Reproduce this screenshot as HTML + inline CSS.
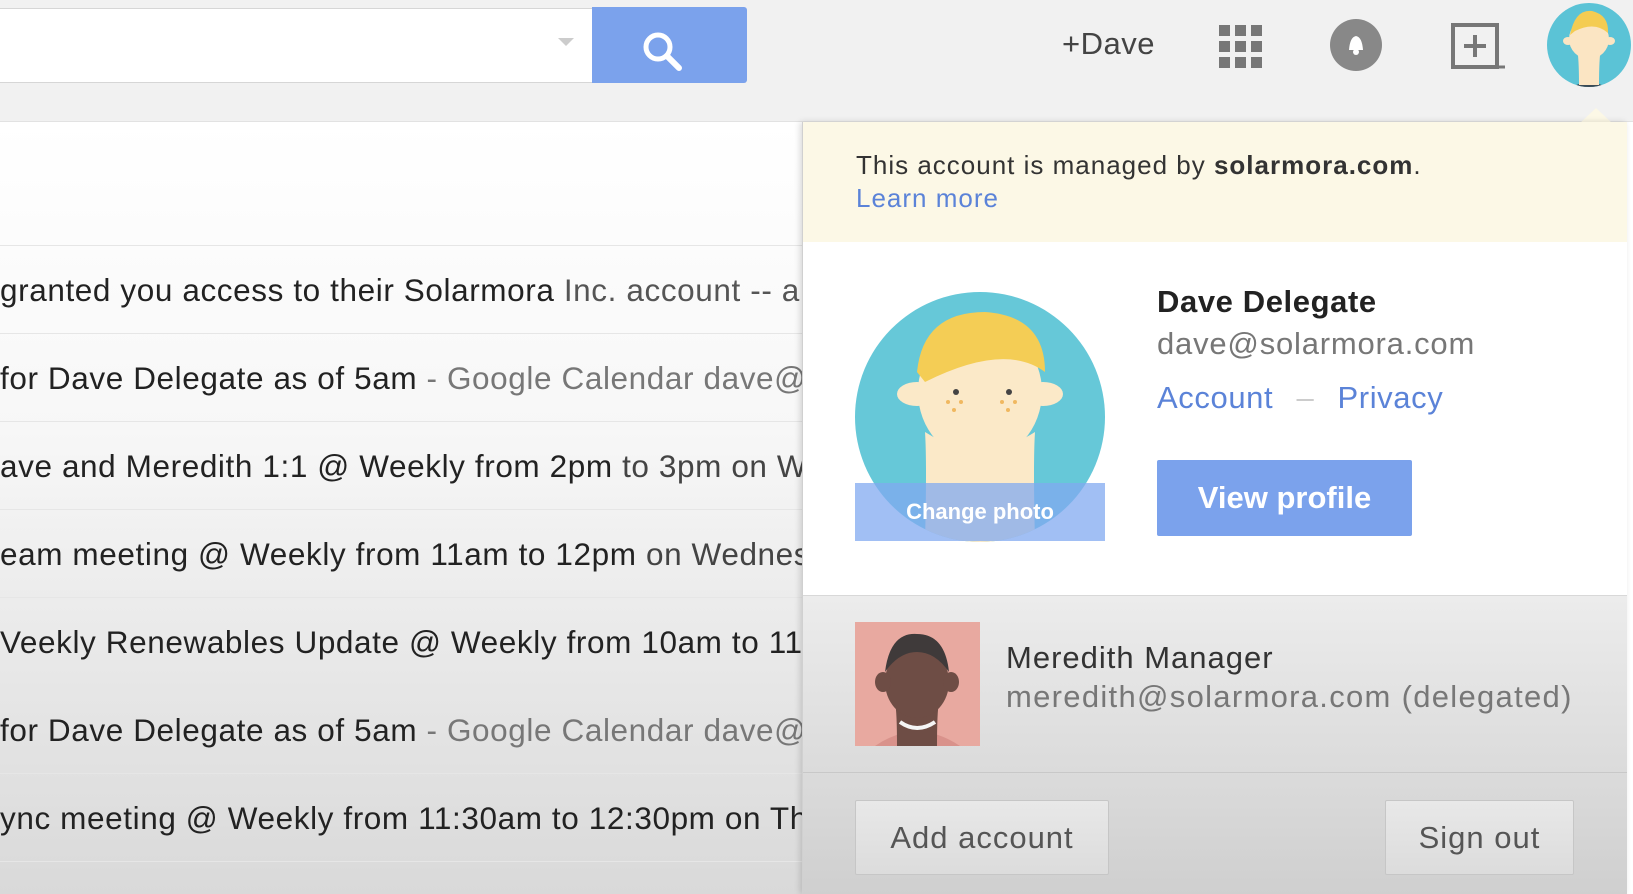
<!DOCTYPE html>
<html><head><meta charset="utf-8"><style>
*{margin:0;padding:0;box-sizing:border-box}
body{width:1633px;height:894px;overflow:hidden;position:relative;font-family:"Liberation Sans",Arial,sans-serif;background:#fff}
.abs{position:absolute}
#top{left:0;top:0;width:1633px;height:122px;background:#f1f1f1;border-bottom:1px solid #e2e2e2}
#search{left:-5px;top:8px;width:598px;height:75px;background:#fff;border:1px solid #d6d6d6}
#sbtn{left:592px;top:7px;width:155px;height:76px;background:#7ba2ec;border-radius:0 3px 3px 0}
#list{left:0;top:122px;width:802px;height:772px;background:linear-gradient(#fff 0%,#f7f7f7 40%,#d9d9d9 100%);overflow:hidden}
.row{position:absolute;left:0;width:802px;height:88px;border-top:1px solid #e6e6e6;font-size:31.5px;letter-spacing:0.6px;line-height:88px;white-space:nowrap;color:#222;overflow:hidden}
.row .g{color:#777}
#panel{left:802px;top:122px;width:825px;height:772px;background:#fff;border-left:1px solid #d0d0d0;box-shadow:-2px 0 6px rgba(0,0,0,.15);overflow:hidden}
#yellow{left:0;top:0;width:825px;height:120px;background:#fcf8e6}
#bottom{left:0;top:473px;width:825px;height:300px;background:linear-gradient(#ececec,#cfcfcf);border-top:1px solid #d8d8d8}
.btn{position:absolute;border:1px solid #c6c6c6;background:linear-gradient(#e8e8e8,#dcdcdc);border-radius:2px;color:#555;font-size:31px;letter-spacing:1px;text-align:center;line-height:73px}
</style></head><body>
<div id="top" class="abs"></div>
<div id="search" class="abs"></div>
<div class="abs" style="left:558px;top:38px;width:0;height:0;border-left:8px solid transparent;border-right:8px solid transparent;border-top:8px solid #ccc"></div>
<div id="sbtn" class="abs"><svg width="155" height="76"><circle cx="66" cy="40" r="12" fill="none" stroke="#fff" stroke-width="5"/><path d="M75 49 L87 61" stroke="#fff" stroke-width="6" stroke-linecap="round"/></svg></div>
<div class="abs" style="left:1062px;top:26px;font-size:31px;letter-spacing:0.5px;color:#444">+Dave</div>
<svg class="abs" style="left:1219px;top:25px" width="43" height="43"><g fill="#777"><rect x="0" y="0" width="11" height="11"/><rect x="16" y="0" width="11" height="11"/><rect x="32" y="0" width="11" height="11"/><rect x="0" y="16" width="11" height="11"/><rect x="16" y="16" width="11" height="11"/><rect x="32" y="16" width="11" height="11"/><rect x="0" y="32" width="11" height="11"/><rect x="16" y="32" width="11" height="11"/><rect x="32" y="32" width="11" height="11"/></g></svg>
<svg class="abs" style="left:1330px;top:19px" width="52" height="52"><circle cx="26" cy="26" r="26" fill="#888"/><path d="M19 31 Q20 18 26 17 Q32 18 33 31 Z" fill="#fff"/><circle cx="26" cy="33" r="3" fill="#fff"/></svg>
<svg class="abs" style="left:1451px;top:23px" width="54" height="48"><rect x="2" y="2" width="44" height="42" fill="none" stroke="#777" stroke-width="4"/><path d="M24 12 V34 M13 23 H35" stroke="#777" stroke-width="4"/><path d="M46 44 H54" stroke="#777" stroke-width="3"/></svg>
<svg class="abs" style="left:1547px;top:3px" width="86" height="86"><defs><clipPath id="c1"><circle cx="42" cy="42" r="42"/></clipPath></defs><g clip-path="url(#c1)"><rect width="86" height="86" fill="#5bc3d6"/><path d="M18 90 Q42 68 66 90Z" fill="#3a4a55"/><path d="M32 82 Q32 55 30 45 Q42 58 54 45 Q52 55 52 82 Z" fill="#fbe5c3"/><ellipse cx="42" cy="36" rx="20" ry="20" fill="#fbe5c3"/><ellipse cx="21" cy="38" rx="5" ry="4" fill="#fbe5c3"/><ellipse cx="63" cy="38" rx="5" ry="4" fill="#fbe5c3"/><path d="M23 32 Q28 6 45 8 Q62 12 61 30 Q48 18 28 28Z" fill="#f4cc52"/></g></svg>
<div class="abs" style="left:1580px;top:108px;width:0;height:0;border-left:16px solid transparent;border-right:16px solid transparent;border-bottom:15px solid #fcf8e6"></div>

<div id="list" class="abs">
<div class="row" style="top:123px">granted you access to their Solarmora <span class="g" style="color:#555">Inc. account -- a</span></div>
<div class="row" style="top:211px">for Dave Delegate as of 5am <span class="g">- Google Calendar dave@solarmora.com</span></div>
<div class="row" style="top:299px">ave and Meredith 1:1 @ Weekly from 2pm <span class="g" style="color:#444">to 3pm on Wednesday</span></div>
<div class="row" style="top:387px">eam meeting @ Weekly from 11am to 12pm <span class="g" style="color:#444">on Wednesday</span></div>
<div class="row" style="top:475px">Veekly Renewables Update @ Weekly from 10am to 11am</div>
<div class="row" style="top:563px">for Dave Delegate as of 5am <span class="g">- Google Calendar dave@solarmora.com</span></div>
<div class="row" style="top:651px">ync meeting @ Weekly from 11:30am to 12:30pm on Thursday</div>
<div class="row" style="top:739px;height:40px">c meeting @ Weekly from 11:30am to 12:30pm</div>
</div>

<div id="panel" class="abs">
<div id="yellow" class="abs"></div>
<div class="abs" style="left:53px;top:28px;font-size:26px;letter-spacing:1px;color:#333">This account is managed by <b>solarmora.com</b>.</div>
<div class="abs" style="left:53px;top:61px;font-size:26px;letter-spacing:1px;color:#5b83d8">Learn more</div>
<svg class="abs" style="left:52px;top:170px" width="250" height="250"><defs><clipPath id="c2"><circle cx="125" cy="125" r="125"/></clipPath></defs><g clip-path="url(#c2)"><rect width="250" height="250" fill="#66c8d8"/><path d="M70 250 Q72 170 70 140 Q125 175 180 140 Q178 170 180 250Z" fill="#fbe9c8"/><ellipse cx="125" cy="100" rx="62" ry="68" fill="#fbe9c8"/><ellipse cx="62" cy="102" rx="20" ry="12" fill="#fbe9c8"/><ellipse cx="188" cy="102" rx="20" ry="12" fill="#fbe9c8"/><path d="M62 80 Q68 20 130 20 Q190 24 190 80 Q150 50 70 90Z" fill="#f4cd55"/><circle cx="101" cy="100" r="3" fill="#444"/><circle cx="154" cy="100" r="3" fill="#444"/><g fill="#f0b860"><circle cx="93" cy="110" r="2"/><circle cx="106" cy="110" r="2"/><circle cx="99" cy="118" r="2"/><circle cx="147" cy="110" r="2"/><circle cx="160" cy="110" r="2"/><circle cx="153" cy="118" r="2"/></g></g></svg>
<div class="abs" style="left:52px;top:361px;width:250px;height:58px;background:rgba(130,170,240,.75);color:#fff;font-weight:bold;font-size:22px;text-align:center;line-height:58px">Change photo</div>
<div class="abs" style="left:354px;top:162px;font-size:31px;letter-spacing:0.6px;font-weight:bold;color:#222">Dave Delegate</div>
<div class="abs" style="left:354px;top:204px;font-size:31px;letter-spacing:0.8px;color:#777">dave@solarmora.com</div>
<div class="abs" style="left:354px;top:258px;font-size:31px;letter-spacing:0.6px;color:#5b83d8">Account <span style="color:#ccc;margin:0 14px">–</span> Privacy</div>
<div class="abs" style="left:354px;top:338px;width:255px;height:76px;background:#7ba2ec;border-radius:2px;color:#fff;font-weight:bold;font-size:31px;text-align:center;line-height:76px">View profile</div>
<div id="bottom" class="abs"></div>
<svg class="abs" style="left:52px;top:500px" width="125" height="124"><rect width="125" height="124" fill="#e8a9a0"/><path d="M20 124 Q62 95 105 124Z" fill="#d9928b"/><path d="M42 124 Q42 90 40 80 Q62 100 84 80 Q82 90 82 124Z" fill="#6e4d45"/><ellipse cx="62" cy="60" rx="32" ry="36" fill="#6e4d45"/><ellipse cx="28" cy="60" rx="8" ry="10" fill="#6e4d45"/><ellipse cx="96" cy="60" rx="8" ry="10" fill="#6e4d45"/><path d="M30 50 Q35 10 62 12 Q90 12 94 50 Q80 30 62 30 Q44 30 30 50Z" fill="#3f3a3a"/><path d="M45 100 Q62 112 80 100" stroke="#f5f5f5" stroke-width="4" fill="none"/></svg>
<div class="abs" style="left:203px;top:518px;font-size:31px;letter-spacing:1px;color:#333">Meredith Manager</div>
<div class="abs" style="left:203px;top:557px;font-size:31px;letter-spacing:1.3px;color:#777">meredith@solarmora.com (delegated)</div>
<div class="abs" style="left:0;top:650px;width:825px;border-top:1px solid #c8c8c8"></div>
<div class="btn" style="left:52px;top:678px;width:254px;height:75px">Add account</div>
<div class="btn" style="left:582px;top:678px;width:189px;height:75px">Sign out</div>
</div>
</body></html>
